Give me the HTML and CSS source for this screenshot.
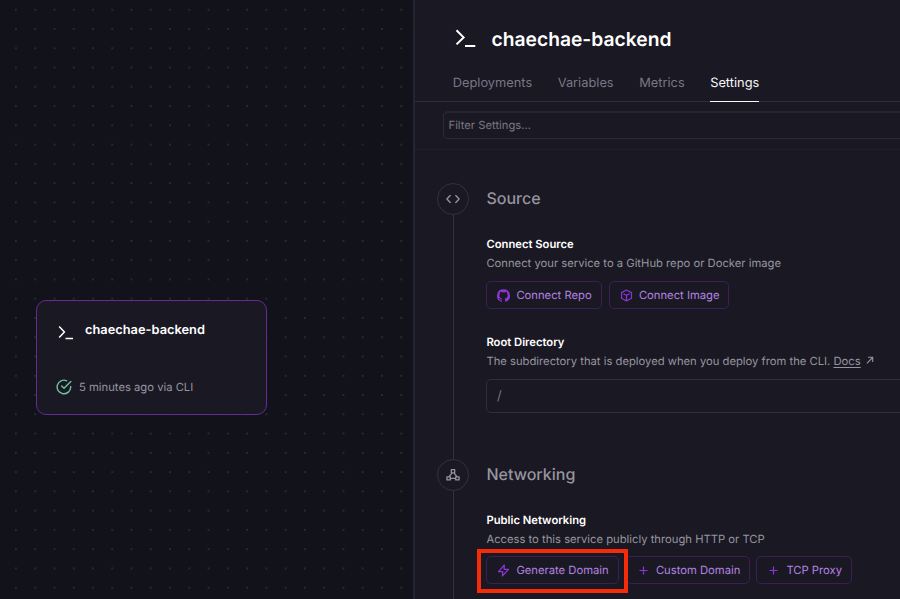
FILE: index.html
```html
<!DOCTYPE html>
<html lang="en">
<head>
<meta charset="utf-8">
<title>chaechae-backend</title>
<link rel="stylesheet" href="styles.css">
</head>
<body>
<div class="app">
  <main class="canvas">
    <svg class="grid" width="413" height="599">
      <defs><pattern id="dots" x="6.3" y="0.1" width="19.265" height="19.265" patternUnits="userSpaceOnUse"><circle cx="9.63" cy="9.63" r="0.9" fill="#32323c"/></pattern></defs>
      <rect width="413" height="599" fill="url(#dots)"/>
    </svg>
    <article class="node">
      <div class="node-head">
        <svg class="node-term" width="16" height="15" viewBox="0 0 16 15" fill="none" stroke="#fff" stroke-width="1.5"><path d="M1.2 1.4 6.4 6.9 1.2 12.4M7.5 13.4H15"/></svg>
        <h2>chaechae-backend</h2>
      </div>
      <div class="node-status">
        <svg width="16" height="16" viewBox="0 0 16 16" fill="none" stroke="#6cc49c" stroke-width="1.4" stroke-linecap="round" stroke-linejoin="round"><path d="M14.7 7.4v.6a6.8 6.8 0 1 1-4-6.2M14.8 2.5 8 9.3 5.7 7.1"/></svg>
        <span>5 minutes ago via CLI</span>
      </div>
    </article>
  </main>
  <section class="panel">
    <header class="panel-head">
      <svg width="21" height="19" viewBox="0 0 21 19" fill="none" stroke="#fff" stroke-width="2"><path d="M1.5 1.2 8.6 8.4 1.5 15.4M10 17H20.3"/></svg>
      <h1>chaechae-backend</h1>
    </header>
    <nav class="tabs">
      <a class="tab">Deployments</a>
      <a class="tab">Variables</a>
      <a class="tab">Metrics</a>
      <a class="tab active">Settings</a>
    </nav>
    <div class="filter"><div class="filter-input">Filter Settings...</div></div>
    <div class="sections">
      <section class="group source">
        <div class="rail">
          <div class="badge"><svg width="14" height="10" viewBox="0 0 14 10" fill="none" stroke="#96959f" stroke-width="1.3" stroke-linecap="round" stroke-linejoin="round"><path d="M4.2 1.5.9 5l3.3 3.500M9.800 1.500 13.100 5 9.800 8.500"/></svg></div>
          <div class="line"></div>
        </div>
        <div class="content">
          <h2 class="group-title">Source</h2>
          <h3>Connect Source</h3>
          <p>Connect your service to a GitHub repo or Docker image</p>
          <div class="buttons">
            <button class="btn b1"><svg width="13" height="13" viewBox="0 0 16 16" fill="#8a36d6"><path d="M8 .2a8 8 0 0 0-2.500 15.600c.4.1.5-.2.5-.4v-1.500c-2.200.5-2.700-1-2.700-1-.4-.9-.9-1.200-.9-1.200-.7-.5.1-.5.1-.5.8.1 1.200.8 1.200.8.7 1.200 1.900.9 2.300.7.1-.5.3-.9.5-1.100C4.700 11.400 2.900 10.700 2.900 7.700c0-.9.3-1.600.8-2.200-.1-.2-.4-1 .1-2.100 0 0 .7-.2 2.200.8a7.500 7.500 0 0 1 4 0c1.500-1 2.200-.8 2.200-.8.4 1.100.2 1.900.1 2.100.5.6.8 1.300.8 2.200 0 3-1.900 3.700-3.700 3.900.3.300.6.800.6 1.500v2.300c0 .2.1.5.5.4A8 8 0 0 0 8 .2Z"/></svg><span>Connect Repo</span></button>
            <button class="btn b2"><svg width="13" height="13" viewBox="0 0 13 13" fill="none" stroke="#8a36d6" stroke-width="1.200" stroke-linejoin="round"><path d="M6.500 1 11.500 3.600V9.300L6.500 12 1.500 9.300V3.600ZM3.400 4.700 6.500 6.300 9.600 4.700M6.500 6.300V12"/></svg><span>Connect Image</span></button>
          </div>
          <h3>Root Directory</h3>
          <p>The subdirectory that is deployed when you deploy from the CLI. <a>Docs</a><svg class="ext" width="8" height="8" viewBox="0 0 8 8" fill="none" stroke="#96959f" stroke-width="1.100"><path d="M.9 7.300 6.600 1.500M2 1.300H6.700V5.900"/></svg></p>
          <div class="text-input">/</div>
        </div>
      </section>
      <section class="group">
        <div class="rail">
          <div class="badge"><svg width="14" height="14" viewBox="0 0 15 14" fill="none" stroke="#96959f" stroke-width="1.400" stroke-linejoin="round"><path d="M5.700 1.200h3.600v3.500H5.700ZM1 9h3.600v3.300H1ZM10.400 9H14v3.300h-3.600ZM6.300 4.900 3.300 8.800M8.700 4.900l3 3.900M4.800 10.600h5.400"/></svg></div>
          <div class="line"></div>
        </div>
        <div class="content">
          <h2 class="group-title">Networking</h2>
          <h3>Public Networking</h3>
          <p>Access to this service publicly through HTTP or TCP</p>
          <div class="buttons">
            <button class="btn b3"><svg width="13" height="13" viewBox="0 0 13 13" fill="none" stroke="#8a36d6" stroke-width="1.200" stroke-linejoin="round"><path d="M7.400 1 1.500 7.700H5.800L5.300 12 11.500 5.300H7.100Z"/></svg><span>Generate Domain</span></button>
            <button class="btn b4"><svg width="13" height="13" viewBox="0 0 13 13" stroke="#8a36d6" stroke-width="1.200"><path d="M6.500 2.500v8M2.500 6.500h8"/></svg><span>Custom Domain</span></button>
            <button class="btn b5"><svg width="13" height="13" viewBox="0 0 13 13" stroke="#8a36d6" stroke-width="1.200"><path d="M6.500 2.500v8M2.500 6.500h8"/></svg><span>TCP Proxy</span></button>
          </div>
        </div>
      </section>
    </div>
  </section>
  <div class="highlight"></div>
</div>
</body>
</html>
```
FILE: styles.css
```css
* { box-sizing: border-box; margin: 0; padding: 0; }
body { background: #12121b; font-family: Inter, "Liberation Sans", sans-serif; color: #96959f; overflow: hidden; text-rendering: geometricPrecision; }
svg { display: block; flex: none; }
h1, h2, h3, p, a, span { white-space: nowrap; }

.app { position: relative; display: flex; width: 900px; height: 599px; overflow: hidden; }

/* Canvas */
.canvas { position: relative; width: 413px; flex: none; background: #12121b; }
.grid { position: absolute; inset: 0; }
.node { position: absolute; left: 36px; top: 300px; width: 231px; height: 115px; border: 1.5px solid #622b98; border-radius: 10px; background: #1a1823; padding: 19px 20px; }
.node-head { display: flex; height: 22px; }
.node-term { margin: 5px 11px 0 1px; }
.node-head h2 { padding-top: 1px; font-size: 12.84px; line-height: 20px; font-weight: 600; color: #fff; }
.node-status { display: flex; align-items: center; gap: 7px; margin: 37px 0 0 -1px; height: 16px; font-size: 11.24px; }

/* Panel */
.panel { flex: none; width: 487px; border-left: 2px solid #252430; background: #1a1823; overflow: hidden; }
.panel-head { display: flex; align-items: center; gap: 15.5px; height: 64px; padding: 13px 0 0 40px; }
.panel-head h1 { font-size: 19.26px; line-height: 24px; font-weight: 600; color: #fff; }
.tabs { display: flex; gap: 25.5px; height: 38px; padding-left: 37.7px; border-bottom: 1px solid #302e3a; }
.tab { height: 38px; padding-top: 10.5px; font-size: 12.84px; line-height: 18px; color: #797783; }
.tab.active { color: #f7f7f8; border-bottom: 1px solid #f7f7f8; }
.filter { height: 48px; padding: 9px 0 0 28px; border-bottom: 1px solid #211f2c; }
.filter-input { width: 480px; height: 28px; border: 1px solid #2d2b38; border-top-width: 2px; border-top-color: #252430; border-radius: 5px; padding-left: 4.5px; font-size: 11.24px; line-height: 25px; color: #797783; }

.sections { padding: 33px 0 0 22px; }
.group { display: flex; gap: 17.4px; height: 276px; }
.rail { display: flex; flex-direction: column; align-items: center; width: 32px; flex: none; }
.badge { display: flex; align-items: center; justify-content: center; width: 32px; height: 32px; flex: none; border: 1px solid #33313e; border-radius: 50%; }
.line { width: 1.5px; flex: 1; background: #33313e; margin-left: 1px; }
.content { flex: 1; }
.group-title { font-size: 16.05px; line-height: 24px; font-weight: 500; color: #96959f; padding-top: 3px; }
h3 { margin-top: 25px; font-size: 11.24px; line-height: 18px; font-weight: 600; color: #fff; }
.content p { display: flex; align-items: center; margin-top: 1px; font-size: 11.24px; line-height: 18px; white-space: pre; }
.content p a { text-decoration: underline; text-underline-offset: 2px; }
.ext { margin: -2px 0 0 5px; }
.buttons { display: flex; gap: 6.5px; margin: 8px 0 0 -.4px; }
.source .buttons { margin-top: 9px; }
.source .buttons + h3 { margin-top: 24px; }
.btn { display: flex; align-items: center; gap: 6.4px; height: 28px; padding-left: 10px; border: 1px solid #3b1f58; border-radius: 5px; background: transparent; font: 400 11.24px/18px Inter, "Liberation Sans", sans-serif; color: #b383e0; text-rendering: geometricPrecision; }
.b1 { width: 116px; }
.b2 { width: 120px; }
.b3 { width: 133px; }
.b4 { width: 124px; }
.b5 { width: 96px; }
.text-input { width: 480px; height: 34px; margin: 9px 0 0 -.4px; border: 1px solid #302e3a; border-radius: 5px; padding-left: 10px; font-size: 12.84px; line-height: 33px; color: #797783; }

.highlight { position: absolute; left: 477px; top: 549px; width: 151px; height: 44px; border: 4px solid #f62b0a; }
```
